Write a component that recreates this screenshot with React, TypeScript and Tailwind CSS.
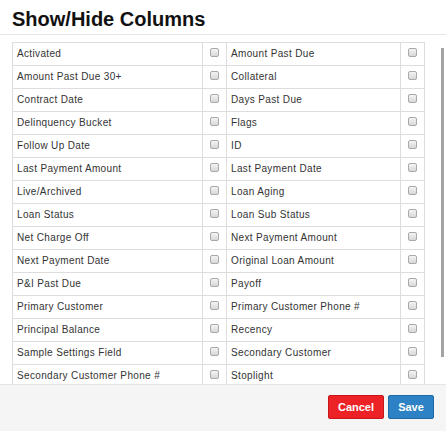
import React from "react";

const rows: [string, string][] = [
  ["Activated", "Amount Past Due"],
  ["Amount Past Due 30+", "Collateral"],
  ["Contract Date", "Days Past Due"],
  ["Delinquency Bucket", "Flags"],
  ["Follow Up Date", "ID"],
  ["Last Payment Amount", "Last Payment Date"],
  ["Live/Archived", "Loan Aging"],
  ["Loan Status", "Loan Sub Status"],
  ["Net Charge Off", "Next Payment Amount"],
  ["Next Payment Date", "Original Loan Amount"],
  ["P&I Past Due", "Payoff"],
  ["Primary Customer", "Primary Customer Phone #"],
  ["Principal Balance", "Recency"],
  ["Sample Settings Field", "Secondary Customer"],
  ["Secondary Customer Phone #", "Stoplight"],
];

function Box() {
  return (
    <div className="mt-[5px] h-[9px] w-[9px] rounded-[2px] border border-[#a9a9a9] bg-gradient-to-b from-[#f4f4f4] to-[#d8d8d8]" />
  );
}

export default function App() {
  return (
    <div
      className="relative h-[431px] w-[446px] overflow-hidden bg-white text-[#222]"
      style={{ fontFamily: '"Liberation Sans", Arial, sans-serif' }}
    >
      <div className="flex h-[35px] items-start border-b border-[#e5e5e5] pl-[12px] pt-[7px]">
        <h1 className="text-[20px] font-bold leading-[24px] text-[#111]">Show/Hide Columns</h1>
      </div>
      <div className="flex h-[349px] overflow-hidden">
        <div className="pl-[12px] pt-[7px]">
          <table className="border-collapse text-[10px] leading-[12px] tracking-[0.35px] text-[#333]">
            <tbody>
              {rows.map(([a, b], i) => (
                <tr key={i} className="h-[23px]">
                  <td className="w-[190px] border border-[#dddddd] px-[4px] align-middle">{a}</td>
                  <td className="w-[24px] border border-[#dddddd] align-top">
                    <div className="flex justify-center"><Box /></div>
                  </td>
                  <td className="w-[174px] border border-[#dddddd] px-[4px] align-middle">{b}</td>
                  <td className="w-[24px] border border-[#dddddd] align-top">
                    <div className="flex justify-center"><Box /></div>
                  </td>
                </tr>
              ))}
            </tbody>
          </table>
        </div>
        <div className="ml-[16px] mt-[13px] h-[309px] w-[3px] bg-[#a3a3a3]" />
      </div>
      <div className="flex h-[47px] items-start justify-end gap-[4px] border-t border-[#e5e5e5] bg-[#f5f5f5] pr-[12px] pt-[10px]">
        <button className="h-[24px] w-[56px] rounded-[2px] border border-[#c9161b] bg-[#ec2227] text-[11px] font-bold text-white">
          Cancel
        </button>
        <button className="h-[24px] w-[46px] rounded-[2px] border border-[#1f6aa5] bg-[#2c82c5] text-[11px] font-bold text-white">
          Save
        </button>
      </div>
    </div>
  );
}
